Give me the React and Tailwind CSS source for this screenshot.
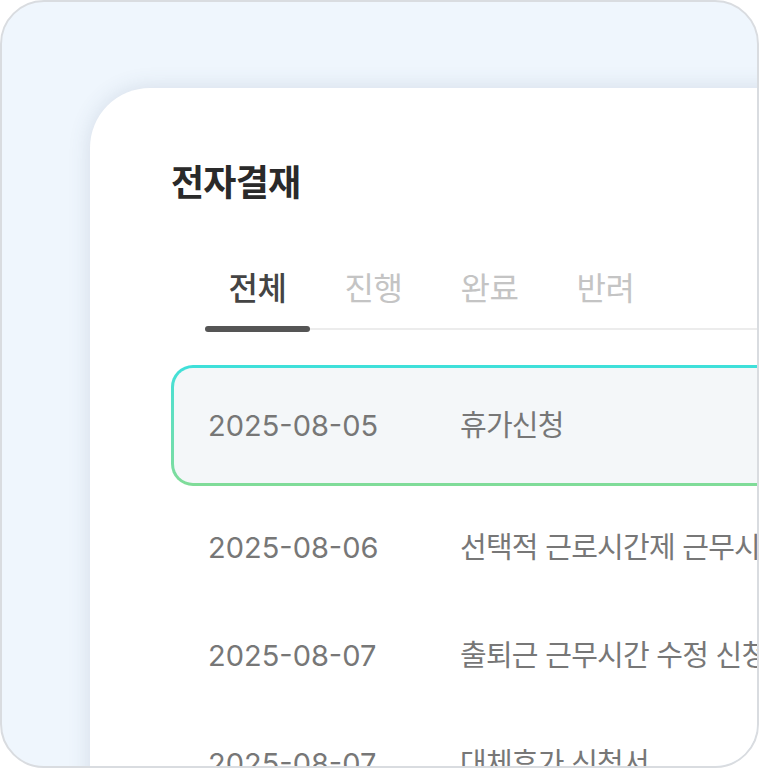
import React from 'react';

const tabs = ['전체', '진행', '완료', '반려'];

const docs = [
  { date: '2025-08-05', title: '휴가신청', active: true },
  { date: '2025-08-06', title: '선택적 근로시간제 근무시간 변경 신청' },
  { date: '2025-08-07', title: '출퇴근 근무시간 수정 신청서' },
  { date: '2025-08-07', title: '대체휴가 신청서' },
];

const font = { fontFamily: '"Inter", "Noto Sans CJK KR", sans-serif' };

// the selected row sits inside a 3px gradient border, so it needs less inset
const Row = ({ date, title, inset }) => (
  <div className={`flex items-center h-full whitespace-nowrap text-[29px] text-[#777] ${inset ? 'pl-[34px]' : 'pl-[37px]'}`}>
    <span className="w-[252px] shrink-0">{date}</span>
    <span className="tracking-[-0.75px]">{title}</span>
  </div>
);

const App = () => {
  return (
    <div className="w-[759px] h-[768px] bg-white" style={font}>
      <div className="w-[759px] h-[768px] rounded-[44px] border-2 border-[#d9dce0] bg-[#eff6fd] overflow-hidden pt-[86px] pl-[88px]">
        <div className="w-[820px] h-[800px] bg-white rounded-tl-[60px] shadow-[0_0_22px_rgba(70,90,120,0.16)] pl-[81px] pt-[75px]">
          <h1 className="text-[36px] leading-[40px] font-bold tracking-[-0.75px] text-[#2a2a2a]">전자결재</h1>

          {/* status tabs */}
          <div className="mt-[66px] ml-[34px] flex gap-[11px] border-b-2 border-[#ececec]">
            {tabs.map((t, i) => (
              <button
                key={t}
                className={`relative w-[105px] pb-[19px] text-[32px] leading-[40px] tracking-[-0.5px] text-center ${
                  i === 0 ? 'font-medium text-[#444]' : 'text-[#c4c4c4]'
                }`}
              >
                {t}
                {i === 0 && (
                  <span className="absolute left-0 right-0 bottom-[-4px] h-[6px] rounded-full bg-[#555]" />
                )}
              </button>
            ))}
          </div>

          {/* document list */}
          <div className="mt-[35px] w-[700px]">
            {docs.map((d, i) =>
              d.active ? (
                <div
                  key={i}
                  className="h-[121px] p-[3px] rounded-[22px] bg-gradient-to-b from-[#3de0da] to-[#80dc98]"
                >
                  <div className="h-full rounded-[19px] bg-[#f4f7f9]">
                    <Row {...d} inset />
                  </div>
                </div>
              ) : (
                <div key={i} className={`h-[108px] ${i === 1 ? 'mt-[8px]' : ''}`}>
                  <Row {...d} />
                </div>
              )
            )}
          </div>
        </div>
      </div>
    </div>
  );
};

export default App;
